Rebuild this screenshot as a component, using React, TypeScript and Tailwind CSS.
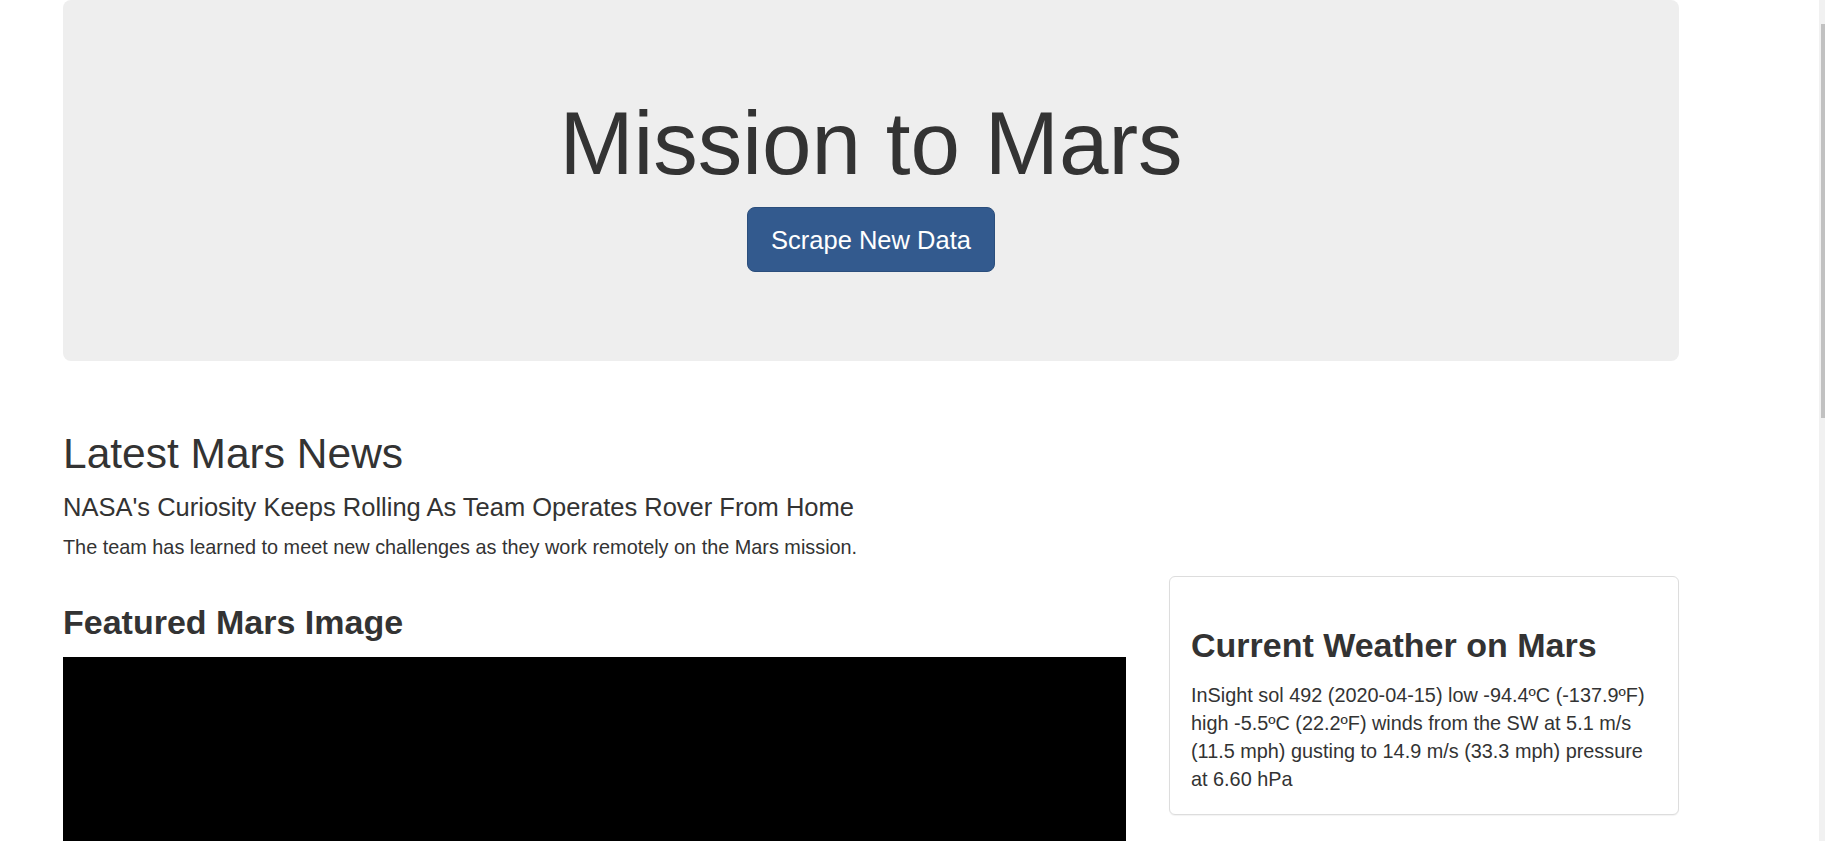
export default function App() {
  return (
    <div className="flex h-[841px] w-full overflow-hidden bg-white font-['Liberation_Sans',Arial,sans-serif] text-[#333]">
      <div className="flex-1 pl-[63px]">
        {/* header */}
        <div className="w-[1616px] rounded-[8px] bg-[#eee] pt-[94px] pb-[89px] text-center">
          <h1 className="m-0 text-[89px] leading-[98px] font-normal">Mission to Mars</h1>
          <div className="mt-[15px]">
            <button className="h-[65px] rounded-[8px] border border-[#2b4e7c] bg-[#335a8e] px-[23px] text-[25.5px] leading-[34px] text-white">
              Scrape New Data
            </button>
          </div>
        </div>

        {/* news */}
        <h2 className="mt-[69px] text-[42.5px] leading-[47px] font-normal">Latest Mars News</h2>
        <h4 className="mt-[16px] text-[25.5px] leading-[28px] font-normal">
          NASA's Curiosity Keeps Rolling As Team Operates Rover From Home
        </h4>
        <p className="mt-[12px] text-[19.85px] leading-[28.4px]">
          The team has learned to meet new challenges as they work remotely on the Mars mission.
        </p>

        <div className="mt-[14.6px] flex w-[1616px] items-start gap-[43px]">
          <div className="w-[1063px]">
            <h3 className="mt-[28px] text-[34px] leading-[37.5px] font-bold">Featured Mars Image</h3>
            <div className="mt-[15.5px] h-[420px] w-full bg-black" />
          </div>
          <div className="w-[510px] rounded-[6px] border border-[#ddd] bg-white px-[21px] pt-[22px] pb-[21px] shadow-[0_1px_1px_rgba(0,0,0,0.05)]">
            <h3 className="mt-[28px] text-[34px] leading-[37.5px] font-bold">Current Weather on Mars</h3>
            <p className="mt-[16px] text-[19.85px] leading-[28.2px]">
              InSight sol 492 (2020-04-15) low -94.4ºC (-137.9ºF) high -5.5ºC (22.2ºF) winds from the SW at 5.1 m/s
              (11.5 mph) gusting to 14.9 m/s (33.3 mph) pressure at 6.60 hPa
            </p>
          </div>
        </div>
      </div>

      {/* scrollbar */}
      <div className="w-[6px] bg-[#f1f1f1] pl-[2px] pt-[24px]">
        <div className="h-[394px] w-[4px] bg-[#c1c1c1]" />
      </div>
    </div>
  );
}
